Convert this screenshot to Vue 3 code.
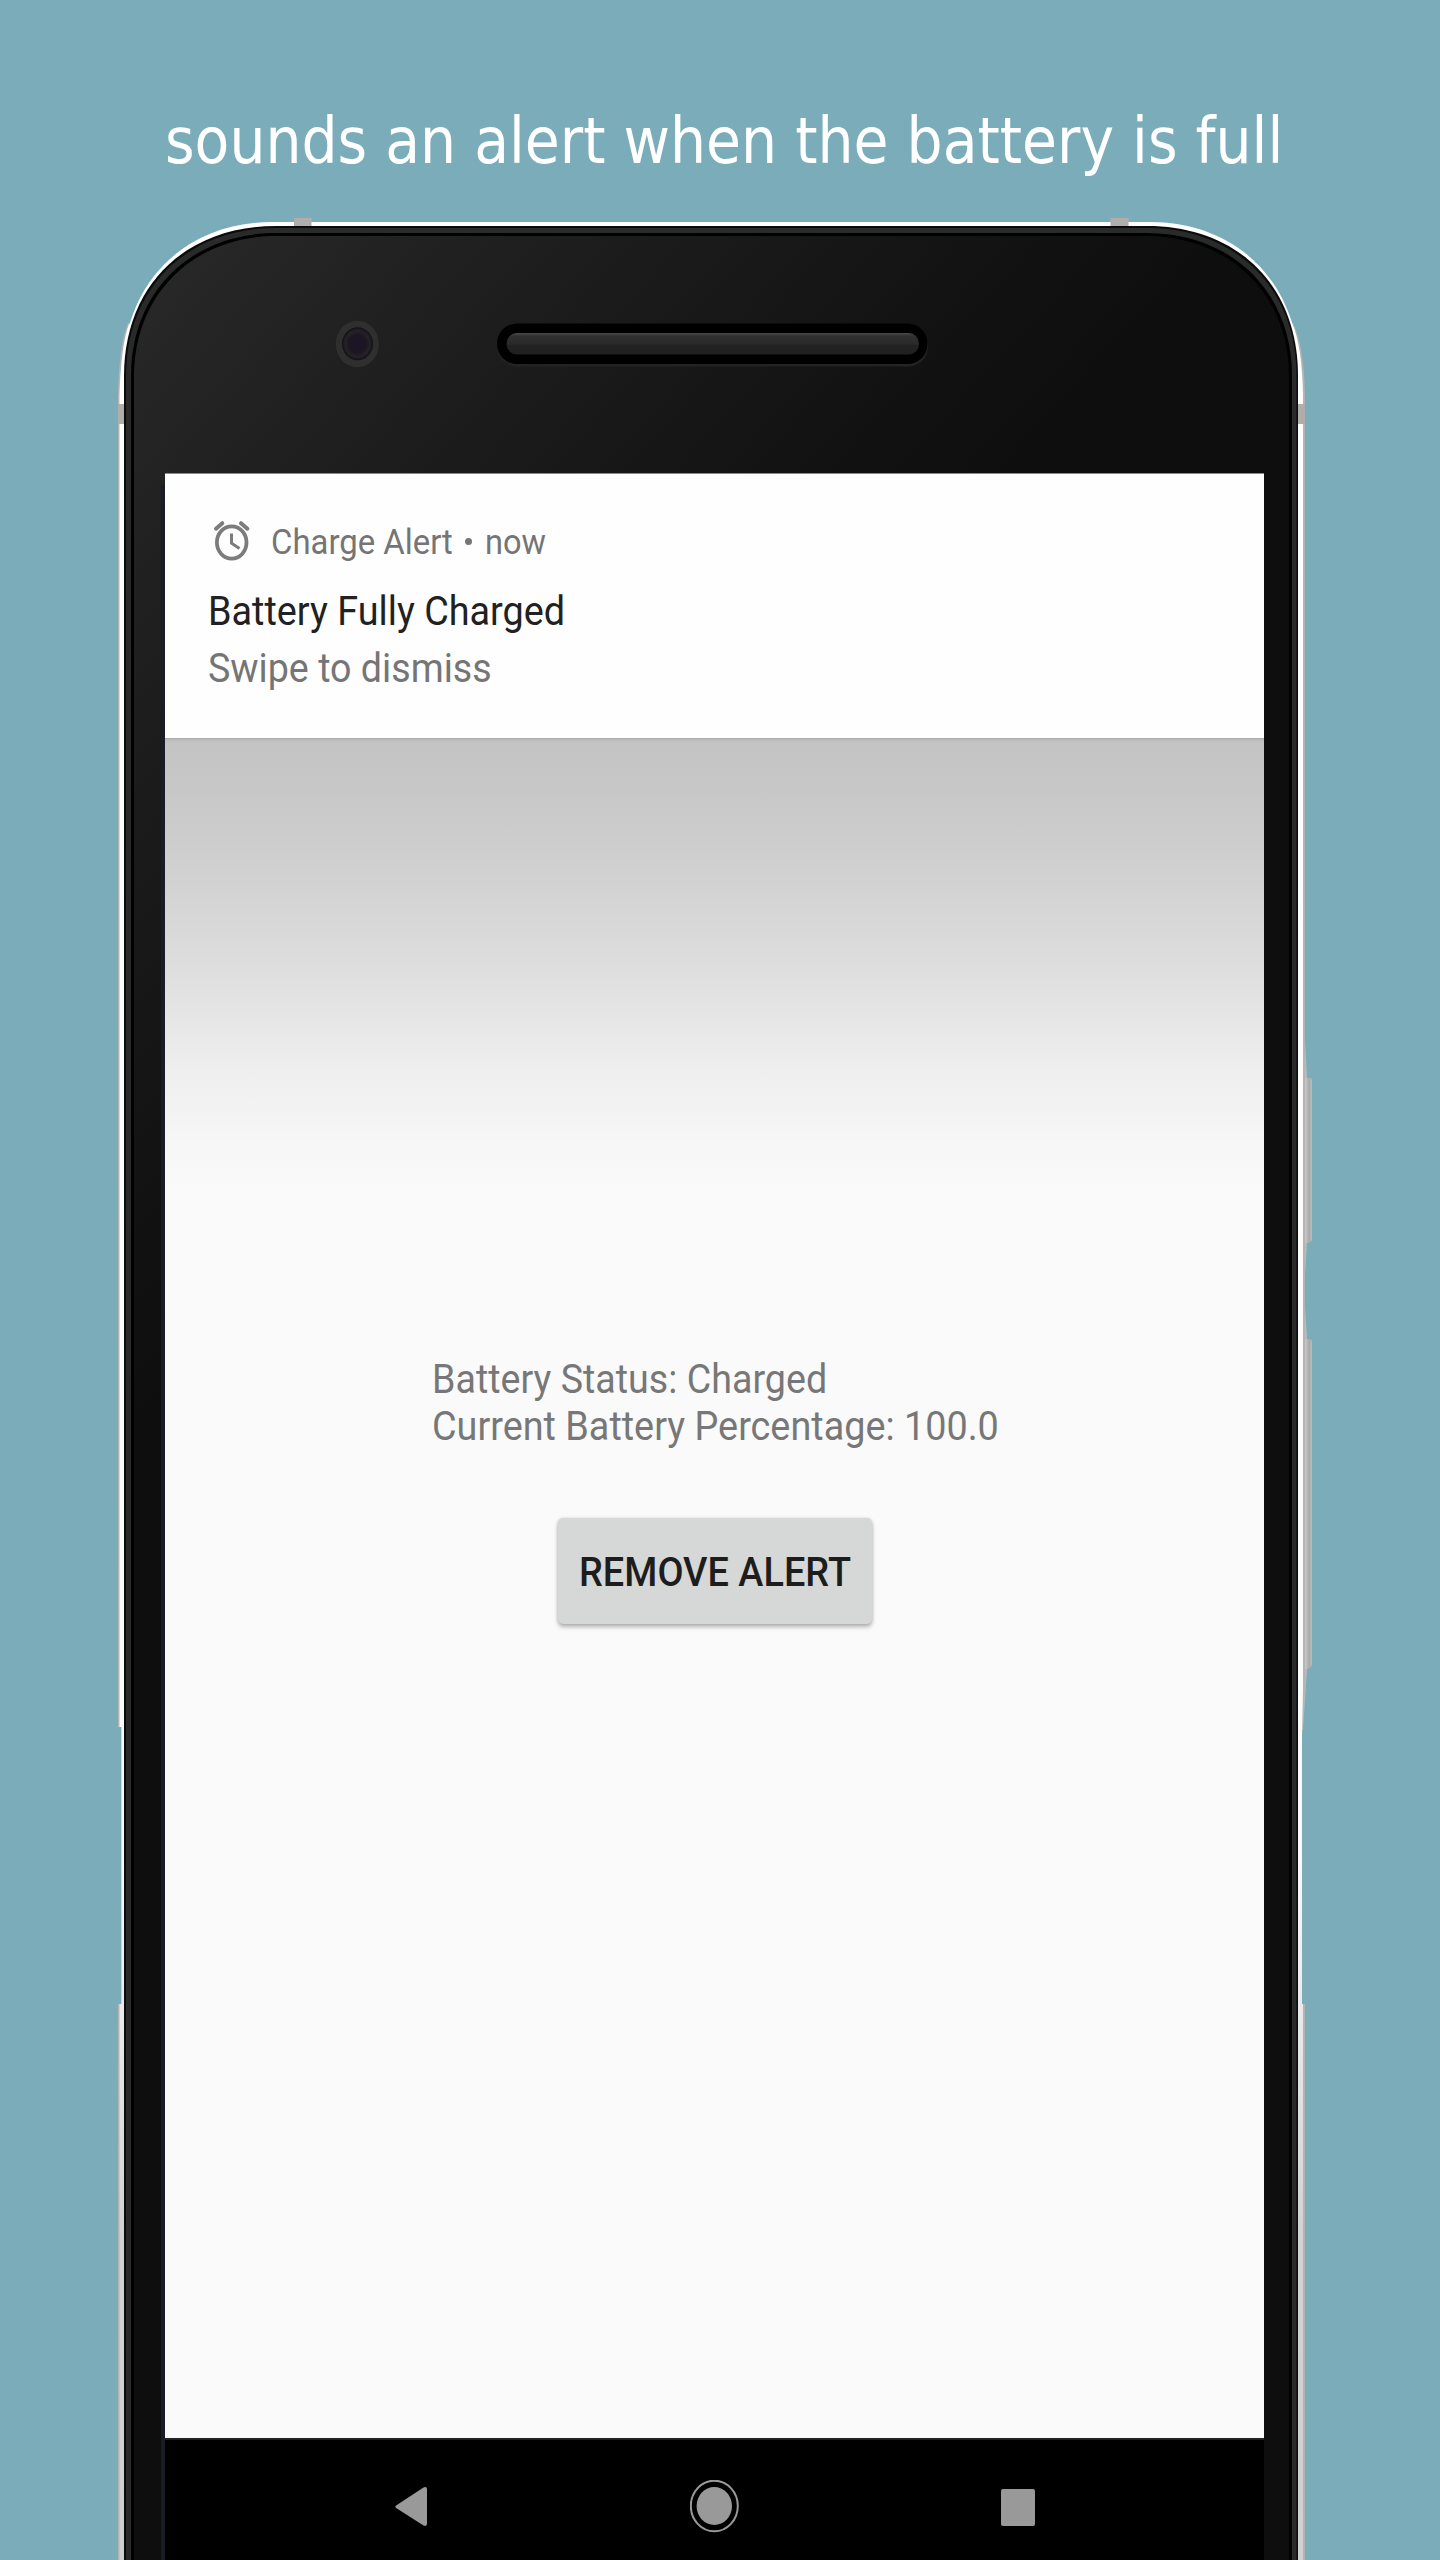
<script setup>
// Condenses a line of text horizontally so that it fills the given width.
const vFit = {
  mounted(el, { value }) {
    el.style.transform = `scaleX(${value / el.offsetWidth})`
  }
}
const status = [
  { text: 'Battery Status: Charged', width: 395 },
  { text: 'Current Battery Percentage: 100.0', width: 567 }
]
</script>

<template>
  <main class="page">
    <h1 class="headline"><span v-fit="1118" class="line">sounds an alert when the battery is full</span></h1>

    <section class="phone">
      <svg class="frame" width="1440" height="2360" viewBox="0 200 1440 2360" aria-hidden="true">
        <defs>
          <linearGradient id="face" gradientUnits="userSpaceOnUse" x1="180" y1="230" x2="760" y2="760">
            <stop offset="0" stop-color="#282828" />
            <stop offset=".35" stop-color="#1e1e1e" />
            <stop offset=".8" stop-color="#121212" />
            <stop offset="1" stop-color="#0e0e0e" />
          </linearGradient>
          <linearGradient id="metal" gradientUnits="userSpaceOnUse" x1="0" y1="220" x2="0" y2="2560">
            <stop offset="0" stop-color="#fff" />
            <stop offset=".7" stop-color="#fafafa" />
            <stop offset=".86" stop-color="#d2d2d2" />
            <stop offset="1" stop-color="#cfcfcf" />
          </linearGradient>
          <linearGradient id="key" x1="0" x2="1" y1="0" y2="0">
            <stop offset="0" stop-color="#d8d8d8" />
            <stop offset=".4" stop-color="#bdbdbd" />
            <stop offset=".7" stop-color="#a9a9a9" />
            <stop offset="1" stop-color="#b5bfc0" />
          </linearGradient>
          <linearGradient id="slot" x1="0" x2="0" y1="0" y2="1">
            <stop offset="0" stop-color="#4c4c4c" />
            <stop offset=".14" stop-color="#303030" />
            <stop offset=".5" stop-color="#2a2a2a" />
            <stop offset=".58" stop-color="#222" />
            <stop offset="1" stop-color="#202020" />
          </linearGradient>
          <radialGradient id="lens">
            <stop offset="0" stop-color="#1d1428" />
            <stop offset=".55" stop-color="#1b1721" />
            <stop offset=".8" stop-color="#262229" />
            <stop offset="1" stop-color="#101012" />
          </radialGradient>
        </defs>

        <!-- side keys -->
        <path fill="#b5bcbc" d="M1300 1040H1305L1307 1077V1243L1305 1275V1306L1307 1338V1670L1305 1700L1303 1730H1300Z" />
        <path fill="url(#key)" d="M1303 1078H1310Q1312 1078 1312 1081V1239Q1312 1242 1308 1243H1303Z" />
        <path fill="url(#key)" d="M1303 1339H1310Q1312 1339 1312 1343V1664Q1312 1667 1308 1669H1303Z" />

        <!-- metal shell -->
        <path fill="#b4b4b4" d="M128 323Q119 345 118 395V1727H121V2004H118V2560H1305V2004H1302V1735L1305 1690V395Q1304 345 1293 323Z" />
        <path fill="url(#metal)" d="M129 324Q121 345 119.500 395V1727H121.500V2004H119.500V2560H1303V2004H1302V1735L1303 1690V395Q1302 345 1292 323Z" />
        <path fill="url(#metal)" d="M122.500 2560V375C122.500 283 185 222 272 222H1150C1237 222 1299.500 283 1299.500 375V2560Z" />
        <path fill="#b1adab" d="M118 404h7v20h-7zM1298 404h7v20h-7zM294 218h17.500v8H294zM1110.500 218h18v8h-18z" />

        <!-- rim -->
        <path fill="#0b0b0b" d="M124 2560V376C124 285 186 226 276 226H1147C1237 226 1298 285 1298 376V2560Z" />
        <path fill="#292a2a" d="M126 2560V376C126 287 188 228 276 228H1147C1235 228 1296.500 287 1296.500 376V2560Z" />
        <path fill="#000" d="M131 2560V376C131 291 192 233 276 233H1147C1231 233 1292 291 1292 376V2560Z" />
        <path fill="url(#face)" d="M134 2560V376C134 293 195 236 276 236H1147C1228 236 1289 293 1289 376V2560Z" />
        <path fill="#1a1d26" d="M161 485h4v2075h-4z" />

        <!-- camera -->
        <ellipse cx="357.300" cy="344" rx="21.500" ry="23.300" fill="#2f2f2f" />
        <ellipse cx="357.500" cy="343.800" rx="15.500" ry="16.500" fill="url(#lens)" />

        <!-- speaker -->
        <rect x="497" y="325" width="431" height="41.500" rx="20" fill="#232323" />
        <rect x="497" y="323.500" width="430.500" height="40.500" rx="20" fill="#000" />
        <rect x="506.500" y="333" width="412.500" height="21.500" rx="10.500" fill="url(#slot)" />
      </svg>

      <div class="screen">
        <article class="notice">
          <header class="source">
            <svg class="alarm" width="38" height="42" viewBox="0 0 38 42" fill="none" stroke="#7c7c7c">
              <ellipse cx="18.700" cy="22.500" rx="14.800" ry="16.200" stroke-width="3.800" />
              <path d="M3 8.700L9.300 3.200M28 3.200L34.400 8.700" stroke-width="4" stroke-linecap="round" />
              <path d="M18.500 13.500V23.200L26.500 28.600" stroke-width="3" />
            </svg>
            <span class="slot app"><span v-fit="182" class="line">Charge Alert</span></span>
            <i class="dot"></i>
            <span class="slot"><span v-fit="61" class="line">now</span></span>
          </header>
          <p class="title"><span v-fit="357" class="line">Battery Fully Charged</span></p>
          <p class="sub"><span v-fit="284" class="line">Swipe to dismiss</span></p>
        </article>

        <div class="content">
          <div class="status">
            <p v-for="row in status" :key="row.text"><span v-fit="row.width" class="line">{{ row.text }}</span></p>
          </div>
          <button class="remove"><span v-fit="272" class="line">REMOVE ALERT</span></button>
        </div>

        <nav class="nav">
          <svg width="34" height="42" viewBox="0 0 34 42"><path d="M2.500 19.200L29.500 1.500Q33 0 33 3.500V37.500Q33 41 29.500 39.500L2.500 22.200Q0 20.700 2.500 19.200Z" fill="#999" /></svg>
          <svg width="50" height="54" viewBox="0 0 50 54"><ellipse cx="24.300" cy="26" rx="23.500" ry="25.300" fill="none" stroke="#999" stroke-width="2" /><ellipse cx="24.300" cy="26" rx="17.700" ry="19" fill="#999" /></svg>
          <svg width="34" height="37" viewBox="0 0 34 37"><rect width="34" height="37" rx="2" fill="#999" /></svg>
        </nav>
      </div>
    </section>
  </main>
</template>

<style>
body { margin: 0; background: #7aacb9; }
</style>

<style scoped>
.page {
  position: relative;
  box-sizing: border-box;
  width: 1440px;
  height: 2560px;
  padding-top: 101px;
  overflow: hidden;
  background: #7aacb9;
  font-family: Roboto, sans-serif;
}
h1, p { margin: 0; font-weight: 400; }
.line { display: inline-block; transform-origin: 0 50%; white-space: nowrap; }
.headline {
  width: 1118px;
  height: 80px;
  padding-left: 165px;
  font: 400 64.5px/80px "DejaVu Sans Condensed", "DejaVu Sans", sans-serif;
  font-stretch: condensed;
  color: #fff;
}
.phone { height: 2379px; }
.frame { position: absolute; left: 0; top: 200px; }
.screen {
  position: relative;
  display: flex;
  flex-direction: column;
  width: 1099px;
  height: 2087px;
  margin: 292px 0 0 165px;
  background: #fafafa;
}
.notice {
  box-sizing: border-box;
  height: 265px;
  padding: 48px 43px 0;
  border-top: 1px solid #8a8a8a;
  background: #fefefe;
  color: #757575;
}
.source { display: flex; height: 40px; padding-left: 5px; font-size: 34.7px; line-height: 40px; }
.alarm { flex: none; margin-top: -2px; }
.slot { display: block; width: 62px; }
.app { width: 182px; margin-left: 20px; }
.dot { width: 7px; height: 7px; margin: 16px 13px 0 12px; border-radius: 50%; background: #757575; }
.title { height: 56px; margin-top: 22px; font-size: 40px; line-height: 56px; color: #212121; }
.sub { height: 57px; font-size: 40px; line-height: 57px; }
.content {
  flex: 1;
  display: flex;
  flex-direction: column;
  align-items: center;
  padding-top: 618px;
  background: linear-gradient(#a8a8a8 0, #bdbdbd 2px, #c4c4c4 5px, #c7c7c7 50px, #d2d2d2 145px, #e0e0e0 245px, #eee 330px, #f7f7f7 410px, #fafafa 450px);
}
.status { width: 566px; font-size: 40.6px; line-height: 47.3px; color: #777; }
.status p { height: 47.3px; }
.remove {
  display: flex;
  justify-content: flex-start;
  box-sizing: border-box;
  width: 314px;
  height: 106px;
  margin-top: 67px;
  padding: 3px 0 0 21px;
  border: 0;
  border-radius: 5px;
  background: #d6d8d7;
  box-shadow: 0 3px 4px rgba(0, 0, 0, .28), 0 0 3px rgba(0, 0, 0, .12);
  font: 500 40.4px/104px Roboto, sans-serif;
  color: #1d1d1d;
}
.nav {
  box-sizing: border-box;
  display: flex;
  align-items: center;
  justify-content: space-between;
  height: 122px;
  padding: 14px 229px 0 229px;
  border-top: 2px solid #222;
  background: #000;
}
</style>
